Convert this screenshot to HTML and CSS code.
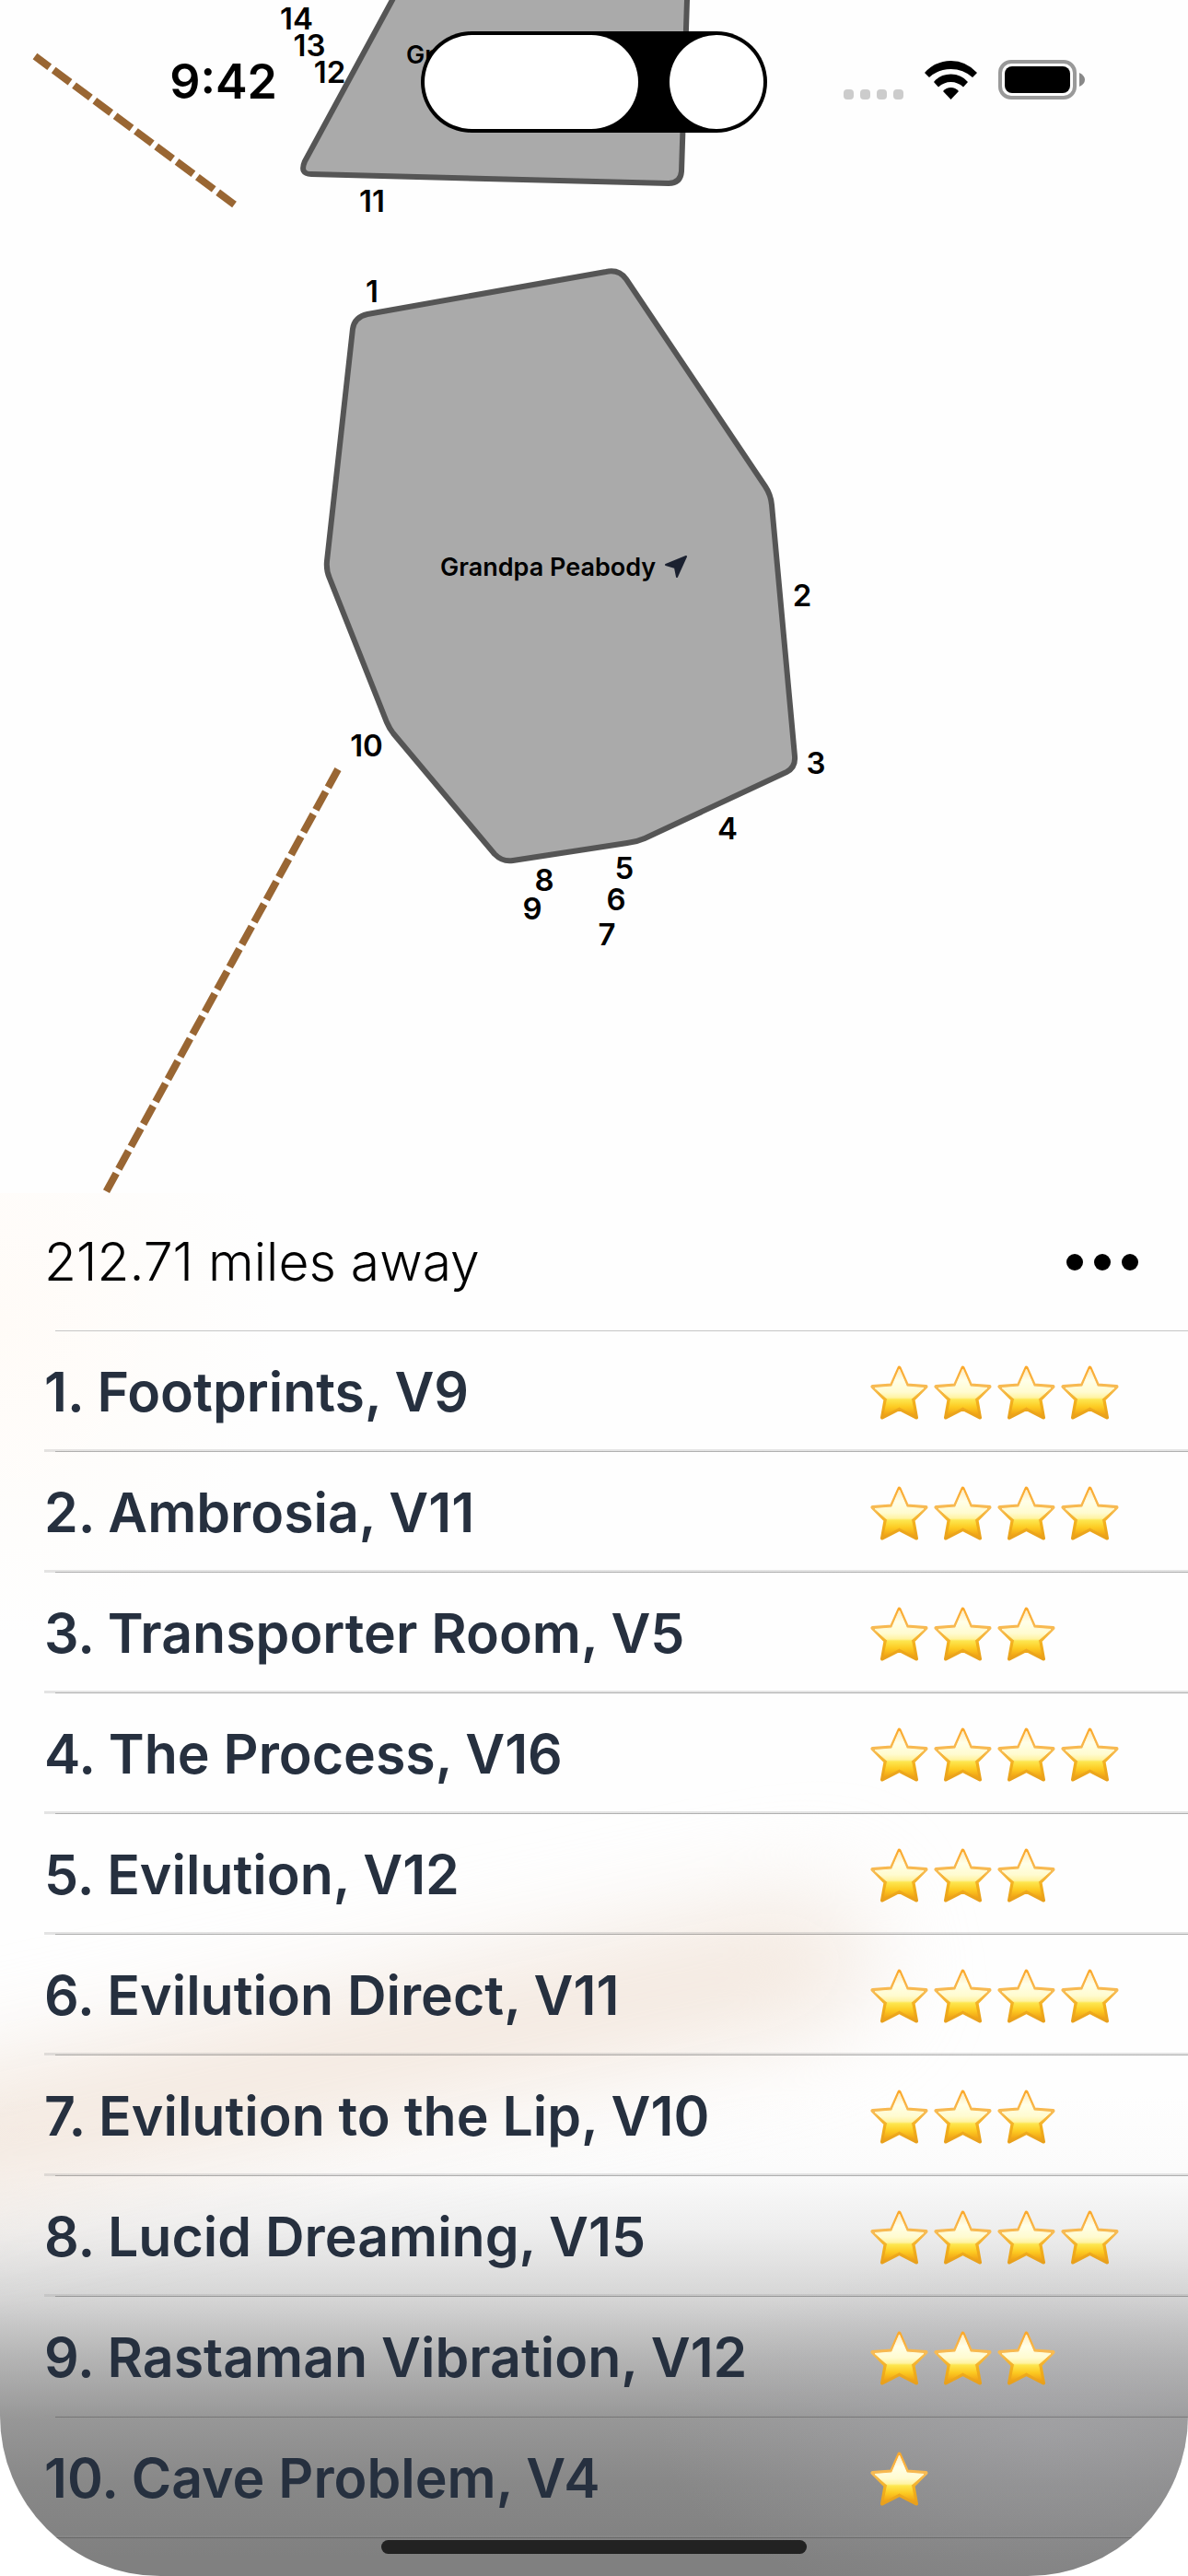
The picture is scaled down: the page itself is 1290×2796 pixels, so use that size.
FILE: index.html
```html
<!DOCTYPE html>
<html lang="en">
<head>
<meta charset="utf-8">
<meta name="viewport" content="width=device-width, initial-scale=1">
<title>Grandpa Peabody</title>
<link rel="stylesheet" href="styles.css">
</head>
<body>
<svg class="defs" aria-hidden="true">
  <defs>
    <linearGradient id="star-edge" x1="0" y1="0" x2="0" y2="1">
      <stop offset="0" stop-color="#fba92c"/>
      <stop offset="0.4" stop-color="#f7bb55"/>
      <stop offset="0.7" stop-color="#f3b01c"/>
      <stop offset="1" stop-color="#e8a01c"/>
    </linearGradient>
    <linearGradient id="star-body" x1="0" y1="0" x2="0" y2="1">
      <stop offset="0" stop-color="#ffedc4"/>
      <stop offset="0.25" stop-color="#ffffe8"/>
      <stop offset="0.5" stop-color="#fffbd0"/>
      <stop offset="0.62" stop-color="#fff3a2"/>
      <stop offset="0.66" stop-color="#fde750"/>
      <stop offset="0.82" stop-color="#fdcb22"/>
      <stop offset="1" stop-color="#f0a014"/>
    </linearGradient>
    <symbol id="star" viewBox="0 0 69 60">
      <path d="M34.500 3.500 L43 22.500 L63.500 24 L49.500 38 L53 57.500 L34.500 48 L16 57.500 L19.500 38 L5.500 24 L26 22.500 Z" fill="url(#star-edge)" stroke="url(#star-edge)" stroke-width="4" stroke-linejoin="round"/>
      <path d="M34.500 5 L42.500 24 L61 25.500 L47.500 37.500 L51 55 L34.500 46 L18 55 L21.500 37.500 L8 25.500 L26.500 24 Z" fill="url(#star-body)" stroke="url(#star-body)" stroke-width="1" stroke-linejoin="round"/>
    </symbol>
  </defs>
</svg>

<div class="screen">
  <header class="status">
    <time class="clock">9:42</time>
    <div class="island"><span class="island-wide"></span><span class="island-round"></span></div>
    <div class="indicators">
      <div class="signal"><i></i><i></i><i></i><i></i></div>
      <svg class="wifi" viewBox="0 0 57 42" aria-label="Wi-Fi">
        <path d="M0 13 Q12 0 28.500 0 Q45 0 57 13 L52 18 Q42 9 28.500 9 Q15 9 5 18 Z"/>
        <path d="M10 23 Q17 14.500 28.500 14.500 Q40 14.500 47 23 L42 28.500 Q36 23 28.500 23 Q21 23 15 28.500 Z"/>
        <path d="M20 33 Q23.500 29 28.500 29 Q33.500 29 37 33 L28.500 42 Z"/>
      </svg>
      <svg class="battery" viewBox="0 0 94 43" aria-label="Battery">
        <rect x="2" y="2" width="81" height="39" rx="12" fill="none" stroke="#999" stroke-width="4"/>
        <rect x="7" y="7" width="71" height="29" rx="8"/>
        <path d="M88 14 Q94 17 94 21.500 Q94 26 88 29 Z" fill="#888"/>
      </svg>
    </div>
  </header>

  <main class="main">
    <svg class="map" viewBox="0 0 1290 1295">
      <g class="trail">
        <path d="M254.500 222 L38 61"/>
        <path d="M367 835 L115 1294"/>
      </g>
      <g class="boulder">
        <path d="M426 0 L331 175 Q325 189 338 189 L726 199 Q739 199 740 186 L746 0 V-20 H436 Z"/>
        <path d="M399 341 L658 295 Q672 292 680 303 L831 528 Q837 537 838 548 L863 821 Q864 833 854 838 L700 910 Q691 914 681 915 L557 934 Q546 936 537 927 L427 796 Q423 791 420 784 L358 628 Q354 619 355 609 L383 357 Q385 344 399 341 Z"/>
      </g>
      <g class="name">
        <text x="441" y="69">Grandma Peabody</text>
        <text x="478" y="625">Grandpa Peabody</text>
        <path d="M723 613 L745 604 L735 626 L733 616 Z"/>
      </g>
      <g class="mark">
        <text x="322" y="32">14</text>
        <text x="336" y="61">13</text>
        <text x="358" y="90">12</text>
        <text x="404" y="230">11</text>
        <text x="404" y="328">1</text>
        <text x="871" y="658">2</text>
        <text x="886" y="840">3</text>
        <text x="790" y="911">4</text>
        <text x="678" y="954">5</text>
        <text x="669" y="988">6</text>
        <text x="659" y="1026">7</text>
        <text x="591" y="967">8</text>
        <text x="578" y="998">9</text>
        <text x="398" y="821">10</text>
      </g>
    </svg>

    <section class="sheet">
      <div class="sheet-head">
        <h1 class="distance">212.71 miles away</h1>
        <button class="more" type="button" aria-label="More"><i></i><i></i><i></i></button>
      </div>
      <ul class="problems">
        <li class="problem"><a href="#1">1. Footprints, V9</a><span class="stars"><svg><use href="#star"/></svg><svg><use href="#star"/></svg><svg><use href="#star"/></svg><svg><use href="#star"/></svg></span></li>
        <li class="problem"><a href="#2">2. Ambrosia, V11</a><span class="stars"><svg><use href="#star"/></svg><svg><use href="#star"/></svg><svg><use href="#star"/></svg><svg><use href="#star"/></svg></span></li>
        <li class="problem"><a href="#3">3. Transporter Room, V5</a><span class="stars"><svg><use href="#star"/></svg><svg><use href="#star"/></svg><svg><use href="#star"/></svg></span></li>
        <li class="problem"><a href="#4">4. The Process, V16</a><span class="stars"><svg><use href="#star"/></svg><svg><use href="#star"/></svg><svg><use href="#star"/></svg><svg><use href="#star"/></svg></span></li>
        <li class="problem"><a href="#5">5. Evilution, V12</a><span class="stars"><svg><use href="#star"/></svg><svg><use href="#star"/></svg><svg><use href="#star"/></svg></span></li>
        <li class="problem"><a href="#6">6. Evilution Direct, V11</a><span class="stars"><svg><use href="#star"/></svg><svg><use href="#star"/></svg><svg><use href="#star"/></svg><svg><use href="#star"/></svg></span></li>
        <li class="problem"><a href="#7">7. Evilution to the Lip, V10</a><span class="stars"><svg><use href="#star"/></svg><svg><use href="#star"/></svg><svg><use href="#star"/></svg></span></li>
        <li class="problem"><a href="#8">8. Lucid Dreaming, V15</a><span class="stars"><svg><use href="#star"/></svg><svg><use href="#star"/></svg><svg><use href="#star"/></svg><svg><use href="#star"/></svg></span></li>
        <li class="problem"><a href="#9">9. Rastaman Vibration, V12</a><span class="stars"><svg><use href="#star"/></svg><svg><use href="#star"/></svg><svg><use href="#star"/></svg></span></li>
        <li class="problem"><a href="#10">10. Cave Problem, V4</a><span class="stars"><svg><use href="#star"/></svg></span></li>
      </ul>
    </section>
  </main>
  <div class="home-bar"></div>
</div>
</body>
</html>
```
FILE: styles.css
```css
* {
  box-sizing: border-box;
}

body {
  margin: 0;
  background: #fff;
  color: #000;
  font-family: Inter, "Liberation Sans", sans-serif;
}

.defs {
  position: absolute;
  width: 0;
  height: 0;
}

.screen {
  position: relative;
  display: flex;
  flex-direction: column;
  min-height: 100vh;
  overflow: hidden;
  border-radius: 0 0 174px 174px;
  background: #fefefe;
}

/* Status bar, floating over the map */
.status {
  position: absolute;
  top: 0;
  left: 0;
  right: 0;
  display: grid;
  grid-template-columns: 1fr 376px 1fr;
  align-items: center;
  padding-top: 34px;
}

.clock {
  justify-self: end;
  padding-right: 156px;
  font-size: 52px;
  line-height: 64px;
  font-weight: 600;
}

.island {
  display: flex;
  justify-content: space-between;
  height: 110px;
  padding: 4px;
  border-radius: 55px;
  background: #000;
}

.island-wide,
.island-round {
  width: 102px;
  border-radius: 51px;
  background: #fff;
}

.island-wide {
  width: 232px;
}

.indicators {
  display: flex;
  align-items: flex-end;
  gap: 23px;
  padding: 0 0 6px 83px;
}

.signal {
  display: flex;
  gap: 7px;
}

.signal i {
  width: 11px;
  height: 11px;
  border-radius: 4px;
  background: #ccc;
}

.wifi {
  width: 57px;
  height: 42px;
}

.battery {
  width: 94px;
  height: 43px;
}

.main {
  display: flex;
  flex: 1;
  flex-direction: column;
}

/* Boulder map */
.map {
  display: block;
  width: 100%;
  height: auto;
}

.trail path {
  fill: none;
  stroke: #996633;
  stroke-width: 8px;
  stroke-dasharray: 22.2 5.6;
}

.boulder path {
  fill: #aaa;
  stroke: #555;
  stroke-width: 6px;
}

.name text {
  font-size: 27px;
  font-weight: 600;
}

.name path {
  fill: #1b2130;
  stroke: #1b2130;
  stroke-width: 2px;
  stroke-linejoin: round;
}

.mark text {
  font-size: 33px;
  font-weight: 600;
  text-anchor: middle;
}

/* Problem list */
.sheet {
  position: relative;
  flex: 1;
  overflow: hidden;
  background:
    radial-gradient(ellipse 300px 340px at 0 140px, #fffbf7, #fffbf700),
    radial-gradient(ellipse 420px 200px at 88% 1345px, #b0b0b666, #b0b0b600),
    linear-gradient(#fefefe 980px, #fbfbfb 1060px, #eeeeee 1125px, #d5d5d5 1200px, #b4b4b4 1265px, #979797 1330px, #888 1400px, #808080 1480px);
}

.sheet::before {
  content: "";
  position: absolute;
  top: 870px;
  left: -12%;
  width: 86%;
  height: 130px;
  border-radius: 65px;
  background: #f2e6dc;
  filter: blur(56px);
  transform: rotate(-12deg);
}

.sheet-head {
  position: relative;
  display: flex;
  align-items: center;
  justify-content: space-between;
  height: 150px;
  padding: 0 54px 0 48px;
  background: linear-gradient(#c6c6c6, #c6c6c6) 60px 100% / 100% 1px no-repeat;
}

.distance {
  margin: 0;
  font-size: 57px;
  line-height: 72px;
  font-weight: 300;
}

.more {
  display: flex;
  gap: 12px;
  padding: 0;
  border: 0;
  background: none;
}

.more i {
  width: 18px;
  height: 18px;
  border-radius: 50%;
  background: #000;
}

.problems {
  position: relative;
  margin: 0 0 0 48px;
  padding: 0;
  list-style: none;
}

.problem {
  display: flex;
  align-items: center;
  height: 131px;
  background:
    linear-gradient(#0000003a, #0000003a) 12px 100% / 100% 1px no-repeat,
    linear-gradient(#96969640, #96969640) 0 100% / 100% 3px no-repeat;
}

.problem a {
  flex: 1;
  color: #26303f;
  font-size: 59px;
  line-height: 72px;
  font-weight: 600;
  text-decoration: none;
}

.stars {
  display: flex;
  width: 348px;
}

.stars svg {
  width: 69px;
  height: 60px;
}

.home-bar {
  position: absolute;
  bottom: 24px;
  left: 50%;
  width: 462px;
  height: 15px;
  margin-left: -231px;
  border-radius: 8px;
  background: #222;
}
```
